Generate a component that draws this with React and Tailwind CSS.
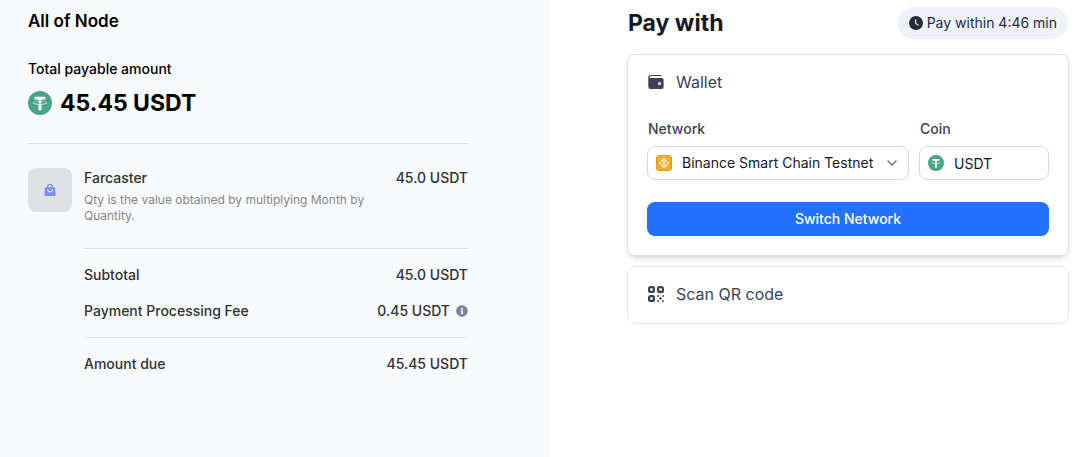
import React from 'react';
import { FaInfoCircle } from 'react-icons/fa';
import { ChevronDown } from 'lucide-react';

function TetherIcon({ className }) {
  return (
    <svg viewBox="0 0 32 32" className={className} aria-hidden="true">
      <circle cx="16" cy="16" r="16" fill="#45a587" />
      <path
        fill="#fff"
        d="M17.922 17.383v-.002c-.11.008-.677.042-1.942.042-1.01 0-1.721-.03-1.971-.042v.003c-3.888-.171-6.79-.848-6.79-1.658 0-.809 2.902-1.486 6.79-1.66v2.644c.254.018.982.061 1.988.061 1.207 0 1.812-.05 1.925-.06v-2.643c3.88.173 6.775.85 6.775 1.658 0 .81-2.895 1.485-6.775 1.657m0-3.59v-2.366h5.414V7.819H8.595v3.608h5.414v2.365c-4.4.202-7.709 1.074-7.709 2.118 0 1.044 3.309 1.915 7.709 2.118v7.582h3.913v-7.584c4.393-.202 7.694-1.073 7.694-2.116 0-1.043-3.301-1.914-7.694-2.117"
      />
    </svg>
  );
}

function BinanceIcon({ className }) {
  return (
    <svg viewBox="0 0 32 32" className={className} aria-hidden="true">
      <rect x="1" y="1" width="30" height="30" rx="5" fill="#f2b02c" stroke="#dc9b1c" strokeWidth="2" />
      <path
        fill="#fff"
        d="M12.116 14.404L16 10.52l3.886 3.886 2.26-2.26L16 6l-6.144 6.144 2.26 2.26zM6 16l2.26-2.26L10.52 16l-2.26 2.26L6 16zm6.116 1.596L16 21.48l3.886-3.886 2.26 2.259L16 26l-6.144-6.144-.003-.003 2.263-2.257zM21.48 16l2.26-2.26L26 16l-2.26 2.26L21.48 16zm-3.188-.002h.002V16L16 18.294l-2.291-2.29-.004-.004.004-.003.401-.402.195-.195L16 13.706l2.293 2.293z"
      />
    </svg>
  );
}

function BagIcon({ className }) {
  return (
    <svg viewBox="0 0 12 12" className={className} fill="none" aria-hidden="true">
      <path d="M3.6 4V2.8a2.4 2.4 0 0 1 4.8 0V4" stroke="#7c8cf8" strokeWidth="1.2" />
      <path d="M2 3.2h8a1.1 1.1 0 0 1 1.1 1l.5 6.3A1.4 1.4 0 0 1 10.2 12H1.8A1.4 1.4 0 0 1 .4 10.5l.5-6.3a1.1 1.1 0 0 1 1.1-1z" fill="#7c8cf8" />
      <path d="M3.7 5.6a2.3 2.3 0 0 0 4.6 0" stroke="#e0e1e3" strokeWidth="1.1" strokeLinecap="round" />
    </svg>
  );
}

function ClockIcon({ className }) {
  return (
    <svg viewBox="0 0 14 14" className={className} fill="none" aria-hidden="true">
      <circle cx="7" cy="7" r="7" fill="#272b38" />
      <path d="M6.7 3.5v4l2.5 1.6" stroke="#eff2fb" strokeWidth="1.1" strokeLinecap="round" />
    </svg>
  );
}

function WalletIcon({ className }) {
  return (
    <svg viewBox="0 0 16 16" className={className} fill="#3a4354" aria-hidden="true">
      <path d="M2.4 1h11.1v1.1H2.6a.9.9 0 0 0 0 1.8h11A2 2 0 0 1 15.6 5.9V13a2 2 0 0 1-2 2H2.5A2.2 2.2 0 0 1 .3 12.8V3.1A2.1 2.1 0 0 1 2.4 1z" />
      <circle cx="11.5" cy="9.5" r="1.5" fill="#fff" />
    </svg>
  );
}

function QrIcon({ className }) {
  return (
    <svg viewBox="0 0 16 16" className={className} aria-hidden="true">
      <g fill="none" stroke="#3a4354" strokeWidth="2.2">
        <rect x="1.1" y="1.1" width="4.8" height="4.8" rx="1.5" />
        <rect x="10.1" y="1.1" width="4.8" height="4.8" rx="1.5" />
        <rect x="1.1" y="10.1" width="4.8" height="4.8" rx="1.5" />
      </g>
      <g fill="#3a4354">
        <circle cx="10" cy="10" r=".9" />
        <circle cx="15" cy="10" r=".9" />
        <circle cx="12.5" cy="12.5" r="1.2" />
        <circle cx="10" cy="15" r=".9" />
        <circle cx="15" cy="15" r=".9" />
      </g>
    </svg>
  );
}

function AmountRow({ label, children }) {
  return (
    <div className="flex items-center justify-between">
      <dt>{label}</dt>
      <dd className="flex items-center gap-1.5">{children}</dd>
    </div>
  );
}

function OrderSummary() {
  return (
    <section className="bg-[#f9fafc] pl-7 pr-[79px] pt-[7px] pb-20 shadow-[1px_0_0_#eff0f2]">
      <h1 className="text-[17px] leading-7 font-semibold text-black">All of Node</h1>

      <p className="mt-6 text-sm font-medium text-black">Total payable amount</p>
      <div className="mt-2 flex items-center gap-2">
        <TetherIcon className="size-6" />
        <span className="text-[23px] leading-8 font-bold text-black">45.45 USDT</span>
      </div>

      <div className="mt-6 flex gap-3 border-t border-[#dfe0e2] pt-6 text-sm font-medium text-[#303133]">
        <div className="flex size-11 shrink-0 items-center justify-center rounded-lg bg-[#e0e1e3]">
          <BagIcon className="size-3" />
        </div>

        <div className="min-w-0 flex-1">
          <div className="flex justify-between gap-4">
            <h2>Farcaster</h2>
            <span>45.0 USDT</span>
          </div>
          <p className="mt-1 max-w-[300px] text-xs font-normal text-[#858688]">
            Qty is the value obtained by multiplying Month by Quantity.
          </p>

          <dl className="mt-6">
            <div className="flex flex-col gap-4 border-t border-[#dfe0e2] py-4">
              <AmountRow label="Subtotal">45.0 USDT</AmountRow>
              <AmountRow label="Payment Processing Fee">
                0.45 USDT
                <FaInfoCircle className="size-3 text-[#7c859b]" />
              </AmountRow>
            </div>
            <div className="border-t border-[#dfe0e2] pt-4">
              <AmountRow label="Amount due">45.45 USDT</AmountRow>
            </div>
          </dl>
        </div>
      </div>
    </section>
  );
}

function PaymentPanel() {
  return (
    <section className="pl-20 pr-5 pt-[7px]">
      <div className="flex items-center justify-between px-px">
        <h2 className="text-[23px] leading-8 font-bold text-[#16181f]">Pay with</h2>
        <div className="flex h-8 items-center gap-1 rounded-full bg-[#eff2fb] pr-[11px] pl-3 text-sm text-[#272b38]">
          <ClockIcon className="size-3.5" />
          Pay within 4:46 min
        </div>
      </div>

      {/* Wallet */}
      <div className="mt-[15px] rounded-lg border border-[#dcdde1] px-[19px] pt-[15px] pb-[19px] shadow-md">
        <div className="flex items-center gap-3 pl-px text-base text-[#3a4354]">
          <WalletIcon className="size-4" />
          Wallet
        </div>

        <div className="mt-[25px] grid grid-cols-[262fr_130fr] gap-[10px] text-sm">
          <div>
            <label htmlFor="network" className="block pl-px font-medium text-[#3a4354]">Network</label>
            <div className="relative mt-[7px]">
              <select
                id="network"
                className="block h-[34px] w-full appearance-none rounded-lg border border-[#d3d8e4] bg-white pl-[34px] pr-7 text-[#16181f]"
              >
                <option>Binance Smart Chain Testnet</option>
              </select>
              <BinanceIcon className="pointer-events-none absolute inset-y-0 left-[9px] my-auto size-4" />
              <ChevronDown className="pointer-events-none absolute inset-y-0 right-[9px] my-auto size-4 text-[#5f6b80]" />
            </div>
          </div>
          <div>
            <label htmlFor="coin" className="block pl-px font-medium text-[#3a4354]">Coin</label>
            <div className="relative mt-[7px]">
              <input
                id="coin"
                type="text"
                readOnly
                value="USDT"
                className="block h-[34px] w-full rounded-lg border border-[#d3d8e4] bg-white pl-[34px] pr-3 text-[#16181f]"
              />
              <TetherIcon className="pointer-events-none absolute inset-y-0 left-[9px] my-auto size-4" />
            </div>
          </div>
        </div>

        <button
          type="button"
          className="mt-[22px] block h-[34px] w-full rounded-lg bg-[#2272ff] text-sm font-medium text-white"
        >
          Switch Network
        </button>
      </div>

      {/* QR code */}
      <button
        type="button"
        className="mt-[10px] flex w-full items-center gap-3 rounded-lg border border-[#e6e8f2] px-5 pt-[15px] pb-[17px] text-base text-[#3a4354]"
      >
        <QrIcon className="size-4" />
        Scan QR code
      </button>
    </section>
  );
}

export default function App() {
  return (
    <main className="grid min-h-screen grid-cols-[547fr_542fr] bg-white font-['Inter',sans-serif]">
      <OrderSummary />
      <PaymentPanel />
    </main>
  );
}
